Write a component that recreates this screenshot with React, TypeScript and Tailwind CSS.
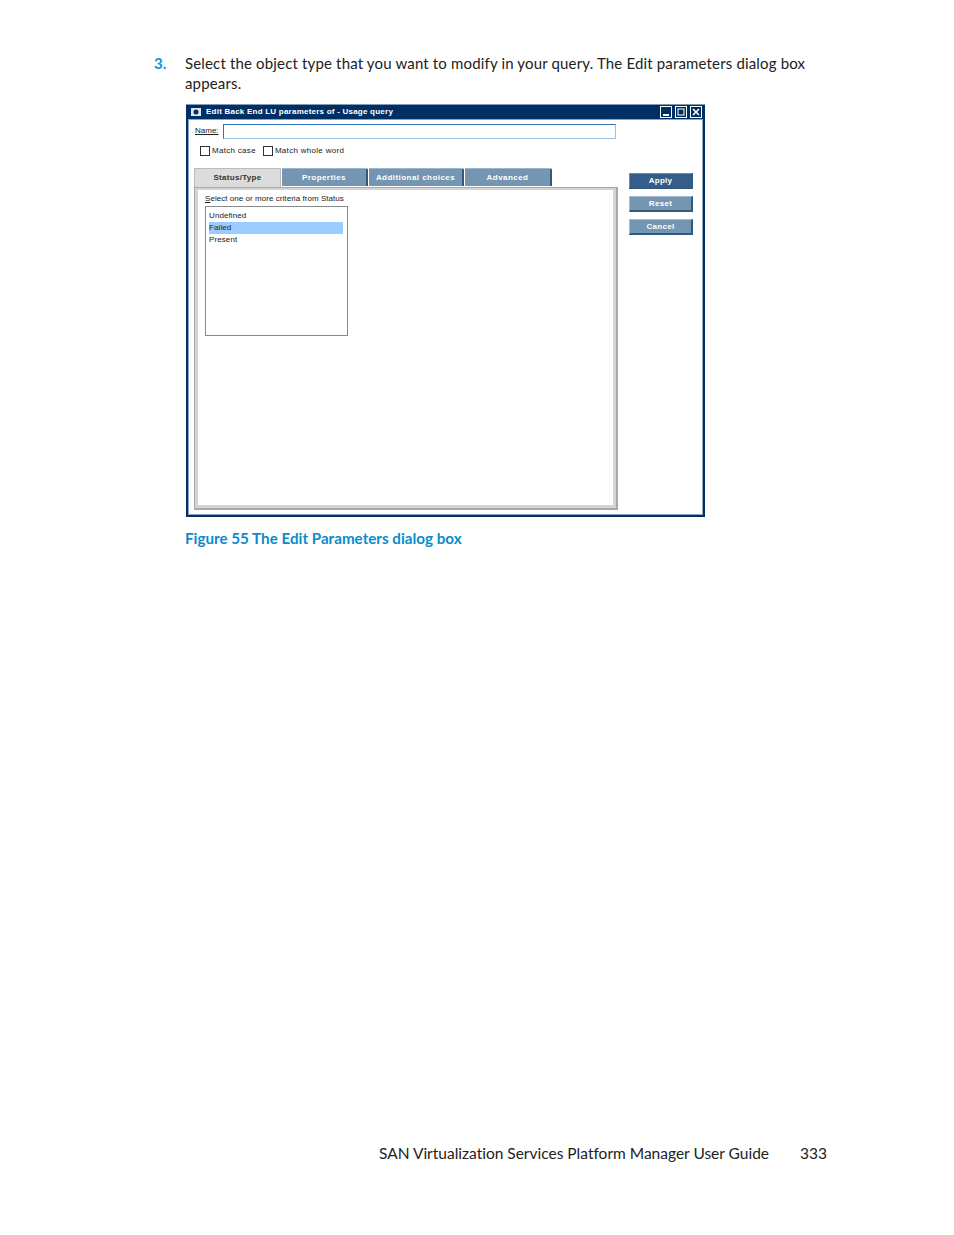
import { FC } from 'react';

const Tab: FC<{ label: string; w: string }> = ({ label, w }) => (
  <div
    className={`${w} h-[18px] flex items-center justify-center bg-[#7496b2] border-r-2 border-r-[#34597f] border-t border-t-[#9db6c9] rounded-tr-[2px] text-white font-bold text-[8px] tracking-[0.45px]`}
  >
    {label}
  </div>
);

const Btn: FC<{ label: string; dark?: boolean }> = ({ label, dark }) => (
  <div
    className={`w-[64px] h-[16px] flex items-center justify-center text-white font-bold text-[8px] tracking-[0.3px] border-b-2 border-r-2 border-[#34597f] border-t border-l ${
      dark ? 'bg-[#345d8a] border-t-[#6f8fae] border-l-[#6f8fae]' : 'bg-[#7496b2] border-t-[#a5bccd] border-l-[#a5bccd]'
    }`}
  >
    {label}
  </div>
);

const Check: FC<{ label: string }> = ({ label }) => (
  <div className="flex items-center gap-[2px]">
    <div className="w-[10px] h-[10px] border border-[#333] bg-white" />
    <span className="text-[8px] tracking-[0.3px] text-[#222]">{label}</span>
  </div>
);

const WinIcon: FC<{ children: React.ReactNode }> = ({ children }) => (
  <svg width="12" height="12" viewBox="0 0 12 12" className="block">
    <rect x="0.5" y="0.5" width="11" height="11" fill="#002f63" stroke="#fff" />
    {children}
  </svg>
);

export default function App() {
  return (
    <div className="w-[954px] h-[1235px] bg-white flex flex-col pt-[54px] pl-[154px] pr-[127px] font-['Lato','Noto_Sans',sans-serif] text-[#222] [font-variant-ligatures:none]">
      <div className="flex text-[15px] leading-[19.5px] tracking-[0.16px]">
        <div className="w-[31px] font-bold text-[#0a96d6] shrink-0">3.</div>
        <p className="w-[640px]">
          Select the object type that you want to modify in your query. The Edit parameters dialog box appears.
        </p>
      </div>

      <div className="ml-[32px] mt-[11px] w-[519px] h-[413px] flex flex-col bg-[#002f63] p-[2px] pt-0 font-['Liberation_Sans',sans-serif]">
        <div className="h-[15px] flex items-center border-t border-t-[#7f9bb5] -mx-[2px] pl-[5px] pr-[3px]">
          <svg width="10" height="8" viewBox="0 0 10 8" className="mr-[5px]">
            <rect width="10" height="8" fill="#dfe6ee" />
            <circle cx="5" cy="4" r="2.5" fill="#002f63" />
          </svg>
          <span className="text-white font-bold text-[8px] tracking-[0.23px]">Edit Back End LU parameters of - Usage query</span>
          <div className="ml-auto flex gap-[3px]">
            <WinIcon>
              <rect x="3" y="8" width="6" height="2" fill="#fff" />
            </WinIcon>
            <WinIcon>
              <rect x="3" y="3" width="6" height="6" fill="none" stroke="#fff" />
            </WinIcon>
            <WinIcon>
              <path d="M3 3l6 6M9 3l-6 6" stroke="#fff" strokeWidth="1.6" />
            </WinIcon>
          </div>
        </div>

        <div className="flex-1 flex bg-white border border-[#8fa5ba] pl-[5px]">
          <div className="w-[425px] flex flex-col">
            <div className="flex items-center mt-[3px] h-[17px]">
              <span className="ml-[1px] w-[28px] pb-[2px] text-[8px] text-[#222] underline decoration-[0.5px]">Name:</span>
              <div className="w-[393px] h-[15px] border border-[#2f73b5] border-b-[#9cc0e0] border-r-[#9cc0e0] bg-white" />
            </div>
            <div className="flex gap-[7px] ml-[6px] mt-[5px] h-[12px]">
              <Check label="Match case" />
              <Check label="Match whole word" />
            </div>
            <div className="flex gap-[1px] mt-[11px]">
              <div className="w-[87px] h-[19px] flex items-center justify-center bg-[#dcdcdc] border-t border-x border-[#bbb] text-[#333] font-bold text-[8px] tracking-[0.3px]">
                Status/Type
              </div>
              <Tab label="Properties" w="w-[86px]" />
              <Tab label="Additional choices" w="w-[95px]" />
              <Tab label="Advanced" w="w-[87px]" />
            </div>
            <div className="w-[424px] h-[323px] border border-[#a8a8a8] border-b-2 border-r-2 bg-white">
              <div className="h-full border-[3px] border-t-[2px] border-[#d4d4d4] pl-[7px] pt-[3px]">
                <div className="text-[8px] leading-[12px] tracking-[0.05px] text-[#222]">
                  <span className="underline decoration-[0.5px]">S</span>elect one or more criteria from Status
                </div>
                <div className="mt-[1px] w-[143px] h-[130px] border border-[#8a8a8a] pt-[3px] pl-[3px] text-[8px] leading-[12px] tracking-[0.1px] text-[#222]">
                  <div>Undefined</div>
                  <div className="w-[134px] bg-[#99ccff]">Failed</div>
                  <div>Present</div>
                </div>
              </div>
            </div>
          </div>
          <div className="ml-[10px] mt-[53px] flex flex-col gap-[7px]">
            <Btn label="Apply" dark />
            <Btn label="Reset" />
            <Btn label="Cancel" />
          </div>
        </div>
      </div>

      <div className="ml-[31px] mt-[11px] font-bold text-[#0a8ccb] text-[15.2px] leading-[20px]">
        Figure 55 The Edit Parameters dialog box
      </div>

      <div className="mt-auto mb-[72px] flex justify-end gap-[31px] text-[15.5px] leading-[20px] text-[#222]">
        <span>SAN Virtualization Services Platform Manager User Guide</span>
        <span>333</span>
      </div>
    </div>
  );
}
